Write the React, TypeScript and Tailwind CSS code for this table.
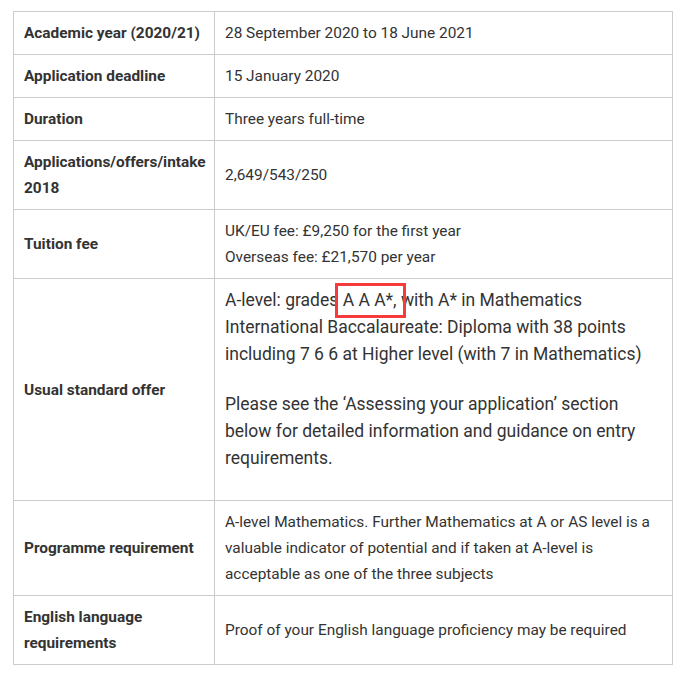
import { type FC, type ReactNode } from "react";

const font = { fontFamily: "Roboto, 'Liberation Sans', sans-serif" };

const Row: FC<{ label: ReactNode; children: ReactNode }> = ({ label, children }) => {
  return (
    <tr>
      <th className="w-[201px] border border-[#cccccc] px-[10px] py-2 text-left align-middle text-[15.4px] font-bold leading-[26px] text-[#333333]">
        {label}
      </th>
      <td className="border border-[#cccccc] px-[10px] py-2 align-middle text-[15.4px] leading-[26px] text-[#333333]">
        {children}
      </td>
    </tr>
  );
};

const App = () => {
  return (
    <div className="min-h-[678px] w-[680px] bg-white pl-[13px] pt-[11px]" style={font}>
      <table className="w-[660px] table-fixed border-collapse">
        <colgroup>
          <col className="w-[201px]" />
          <col />
        </colgroup>
        <tbody>
          <Row label="Academic year (2020/21)">28 September 2020 to 18 June 2021</Row>
          <Row label="Application deadline">15 January 2020</Row>
          <Row label="Duration">Three years full-time</Row>
          <Row label="Applications/offers/intake 2018">2,649/543/250</Row>
          <Row label="Tuition fee">
            UK/EU fee: £9,250 for the first year
            <br />
            Overseas fee: £21,570 per year
          </Row>
          <Row label="Usual standard offer">
            <div className="text-[17.5px] leading-[27px]">
              <p className="mb-[23px]">
                A-level: grades{" "}
                <span className="relative">
                  A A A*,
                  <span className="absolute -bottom-[8px] -left-[8px] -right-[9px] -top-[7px] border-[3px] border-[#f53b3b]" />
                </span>{" "}
                with A* in Mathematics
                <br />
                International Baccalaureate: Diploma with 38 points including 7 6 6 at Higher level (with 7 in
                Mathematics)
              </p>
              <p className="mb-5">
                Please see the ‘Assessing your application’ section below for detailed information and guidance on
                entry requirements.
              </p>
            </div>
          </Row>
          <Row label="Programme requirement">
            A-level Mathematics. Further Mathematics at A or AS level is a valuable indicator of potential and if
            taken at A-level is acceptable as one of the three subjects
          </Row>
          <Row label="English language requirements">
            Proof of your English language proficiency may be required
          </Row>
        </tbody>
      </table>
    </div>
  );
};

export default App;
